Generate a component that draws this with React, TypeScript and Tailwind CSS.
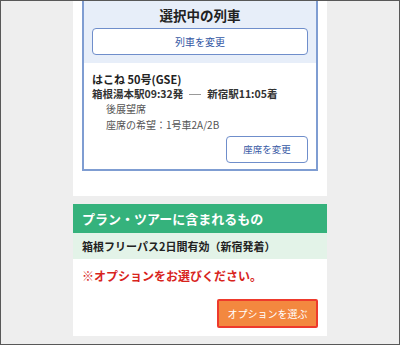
import React from "react";

const font = { fontFamily: '"Noto Sans CJK JP", "Noto Sans", sans-serif' };

export default function App() {
  return (
    <div
      className="w-[400px] h-[345px] box-border border border-[#585858] bg-[#eeeeee] overflow-hidden"
      style={font}
    >
      <div className="w-[254px] mx-auto flex flex-col">
        {/* section 1 */}
        <div className="bg-white px-[9px] pb-[25px]">
          <div className="border-2 border-t-0 border-[#7f9dd2] flex flex-col">
            <div className="bg-[#e7eef9] flex flex-col pt-[4px] pb-[8px]">
              <div className="text-center text-[13.5px] font-bold leading-[20px] text-[#222]">
                選択中の列車
              </div>
              <div className="mt-[3px] mx-[8px] h-[27px] rounded-[4px] border border-[#6f8ecb] bg-white flex items-center justify-center text-[10px] text-[#3558a4]">
                列車を変更
              </div>
            </div>
            <div className="flex flex-col pl-[8px] pr-[8px] pt-[8px] pb-[6px]">
              <div className="text-[11px] font-bold leading-[16px] text-[#222]">
                はこね 50号(GSE)
              </div>
              <div className="text-[10.5px] font-bold leading-[14px] text-[#333] flex items-center">
                <span>箱根湯本駅09:32発</span>
                <span className="inline-block w-[12px] h-px bg-[#999] mx-[6px]"></span>
                <span>新宿駅11:05着</span>
              </div>
              <div className="pl-[14px] text-[10px] leading-[16px] text-[#555]">
                後展望席
              </div>
              <div className="pl-[14px] text-[10px] leading-[16px] text-[#555]">
                座席の希望：1号車2A/2B
              </div>
              <div className="flex justify-end mt-[3px]">
                <div className="w-[82px] h-[27px] rounded-[4px] border border-[#6f8ecb] bg-white flex items-center justify-center text-[9.5px] text-[#3558a4]">
                  座席を変更
                </div>
              </div>
            </div>
          </div>
        </div>

        {/* section 2 */}
        <div className="mt-[8px] bg-white flex flex-col pb-[8px]">
          <div className="h-[29px] bg-[#35b27c] flex items-center px-[9px] text-[13px] font-bold text-white">
            プラン・ツアーに含まれるもの
          </div>
          <div className="h-[26px] bg-[#e3f3e8] flex items-center px-[9px] text-[11px] font-bold text-[#222]">
            箱根フリーパス2日間有効（新宿発着）
          </div>
          <div className="mt-[7px] px-[9px] text-[12px] font-bold leading-[20px] text-[#d8241c]">
            ※オプションをお選びください。
          </div>
          <div className="flex justify-end mt-[13px] pr-[9px]">
            <div className="w-[101px] h-[29px] rounded-[2px] border-2 border-[#ee3a2c] bg-[#f3883f] flex items-center justify-center text-[10px] text-white">
              オプションを選ぶ
            </div>
          </div>
        </div>
      </div>
    </div>
  );
}
